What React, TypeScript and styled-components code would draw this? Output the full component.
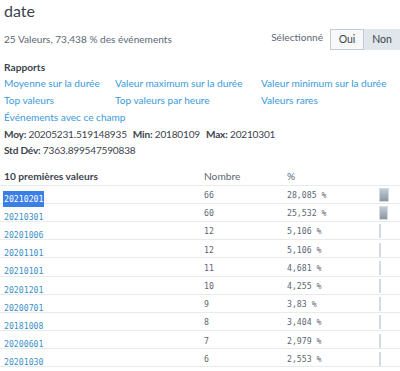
import React from 'react';
import styled, { createGlobalStyle } from 'styled-components';

const GlobalStyle = createGlobalStyle`
	html, body {
		margin: 0;
		padding: 0;
		background: #fff;
	}
	body {
		font-family: Lato, "Open Sans", sans-serif;
		color: #3c444d;
	}
`;

const rows = [
	{ value: '20210201', count: 66, pct: '28,085', n: 28.085, selected: true },
	{ value: '20210301', count: 60, pct: '25,532', n: 25.532 },
	{ value: '20201006', count: 12, pct: '5,106', n: 5.106 },
	{ value: '20201101', count: 12, pct: '5,106', n: 5.106 },
	{ value: '20210101', count: 11, pct: '4,681', n: 4.681 },
	{ value: '20201201', count: 10, pct: '4,255', n: 4.255 },
	{ value: '20200701', count: 9, pct: '3,83', n: 3.83 },
	{ value: '20181008', count: 8, pct: '3,404', n: 3.404 },
	{ value: '20200601', count: 7, pct: '2,979', n: 2.979 },
	{ value: '20201030', count: 6, pct: '2,553', n: 2.553 },
];

const links = [
	'Moyenne sur la durée',
	'Valeur maximum sur la durée',
	'Valeur minimum sur la durée',
	'Top valeurs',
	'Top valeurs par heure',
	'Valeurs rares',
	'Événements avec ce champ',
];

export default function App() {
	return (
		<>
			<GlobalStyle />
			<Panel>
				<Title>date</Title>

				<SummaryRow>
					<Summary>25 Valeurs, 73,438 % des événements</Summary>
					<Toggle>
						<ToggleLabel>Sélectionné</ToggleLabel>
						<ToggleButton>Oui</ToggleButton>
						<ToggleButton active>Non</ToggleButton>
					</Toggle>
				</SummaryRow>

				<SectionTitle>Rapports</SectionTitle>
				<LinkGrid>
					{links.map((l) => (
						<ReportLink key={l}>{l}</ReportLink>
					))}
				</LinkGrid>

				<Stats>
					<Stat><b>Moy:</b> 20205231.519148935</Stat>
					<Stat><b>Min:</b> 20180109</Stat>
					<Stat><b>Max:</b> 20210301</Stat>
				</Stats>
				<Stats>
					<Stat><b>Std Dév:</b> 7363.899547590838</Stat>
				</Stats>

				<Table>
					<HeadRow>
						<HeadCell bold>10 premières valeurs</HeadCell>
						<HeadCell>Nombre</HeadCell>
						<HeadCell>%</HeadCell>
						<HeadCell />
					</HeadRow>
					{rows.map((r) => (
						<Row key={r.value}>
							<ValueCell>
								<Value selected={r.selected}>{r.value}</Value>
							</ValueCell>
							<NumCell>{r.count}</NumCell>
							<NumCell>{r.pct} %</NumCell>
							<BarCell>
								<Bar style={{ width: Math.max(2, r.n * 0.36) }} />
							</BarCell>
						</Row>
					))}
				</Table>
			</Panel>
		</>
	);
}

const Panel = styled.div`
	width: 400px;
	padding: 0 0 0 4px;
	box-sizing: border-box;
`;

const Title = styled.div`
	font-size: 16px;
	line-height: 20px;
	padding-top: 1px;
	color: #3c444d;
`;

const SummaryRow = styled.div`
	display: flex;
	align-items: center;
	justify-content: space-between;
	margin-top: 7px;
	height: 22px;
`;

const Summary = styled.div`
	font-size: 10.1px;
	color: #5c6773;
`;

const Toggle = styled.div`
	display: flex;
	align-items: center;
`;

const ToggleLabel = styled.span`
	font-size: 10.1px;
	color: #5c6773;
	margin-right: 7px;
	position: relative;
	top: -2px;
`;

const ToggleButton = styled.div<{ active?: boolean }>`
	height: 21px;
	width: ${(p) => (p.active ? '36px' : '34px')};
	box-sizing: border-box;
	display: flex;
	align-items: center;
	justify-content: center;
	font-size: 10.5px;
	color: #3c444d;
	background: ${(p) => (p.active ? '#e1e6eb' : '#f7f8fa')};
	border: 1px solid ${(p) => (p.active ? '#e1e6eb' : '#c3cbd4')};
`;

const SectionTitle = styled.div`
	font-size: 10.2px;
	font-weight: 700;
	line-height: 16px;
	margin-top: 9px;
`;

const LinkGrid = styled.div`
	display: grid;
	grid-template-columns: 111px 146px auto;
	row-gap: 1px;
`;

const ReportLink = styled.a`
	font-size: 10.1px;
	line-height: 16.2px;
	color: #3a9ad9;
	cursor: pointer;
	white-space: nowrap;
`;

const Stats = styled.div`
	display: flex;
	gap: 6px;
	font-size: 10.1px;
	letter-spacing: -0.2px;
	line-height: 16px;
	color: #3c444d;
	b {
		font-weight: 700;
	}
`;

const Stat = styled.span``;

const Table = styled.div`
	margin-top: 9px;
	margin-left: -4px;
`;

const gridCols = `
	display: grid;
	grid-template-columns: 204px 83px 92px 21px;
	align-items: center;
`;

const HeadRow = styled.div`
	${gridCols}
	height: 18px;
	border-bottom: 1px solid #e8ebee;
`;

const HeadCell = styled.div<{ bold?: boolean }>`
	font-size: 10.2px;
	font-weight: ${(p) => (p.bold ? 700 : 400)};
	color: #3c444d;
	padding-left: 4px;
	&:nth-child(n + 2) {
		padding-left: 0;
		color: #5c6773;
	}
`;

const Row = styled.div`
	${gridCols}
	height: 18.2px;
	box-sizing: border-box;
	border-bottom: 1px solid #e8ebee;
`;

const ValueCell = styled.div`
	padding-left: 4px;
`;

const Value = styled.span<{ selected?: boolean }>`
	font-family: "DejaVu Sans Mono", monospace;
	font-size: 8.2px;
	color: ${(p) => (p.selected ? '#fff' : '#3a8fc8')};
	background: ${(p) => (p.selected ? '#3b7fe6' : 'transparent')};
	padding: 3px 1px;
	margin-left: -1px;
`;

const NumCell = styled.div`
	font-family: "DejaVu Sans Mono", monospace;
	font-size: 8.2px;
	color: #5c6773;
`;

const BarCell = styled.div`
	display: flex;
	align-items: center;
	height: 100%;
`;

const Bar = styled.div`
	height: 14px;
	background: linear-gradient(to bottom, #c3cbd4, #8996a4);
	border: 1px solid #d4dae0;
	box-sizing: border-box;
`;
